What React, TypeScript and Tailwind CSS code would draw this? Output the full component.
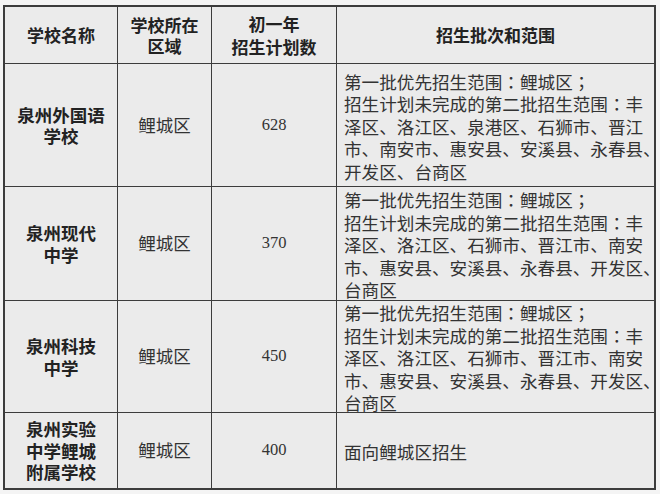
const rows = [
  {
    name: ["泉州外国语", "学校"],
    area: "鲤城区",
    count: "628",
    scope: [
      "第一批优先招生范围：鲤城区；",
      "招生计划未完成的第二批招生范围：丰",
      "泽区、洛江区、泉港区、石狮市、晋江",
      "市、南安市、惠安县、安溪县、永春县、",
      "开发区、台商区",
    ],
    h: "h-[122px]",
  },
  {
    name: ["泉州现代", "中学"],
    area: "鲤城区",
    count: "370",
    scope: [
      "第一批优先招生范围：鲤城区；",
      "招生计划未完成的第二批招生范围：丰",
      "泽区、洛江区、石狮市、晋江市、南安",
      "市、惠安县、安溪县、永春县、开发区、",
      "台商区",
    ],
    h: "h-[113px]",
  },
  {
    name: ["泉州科技", "中学"],
    area: "鲤城区",
    count: "450",
    scope: [
      "第一批优先招生范围：鲤城区；",
      "招生计划未完成的第二批招生范围：丰",
      "泽区、洛江区、石狮市、晋江市、南安",
      "市、惠安县、安溪县、永春县、开发区、",
      "台商区",
    ],
    h: "h-[111px]",
  },
  {
    name: ["泉州实验", "中学鲤城", "附属学校"],
    area: "鲤城区",
    count: "400",
    scope: ["面向鲤城区招生"],
    h: "h-[75px]",
  },
];

const sans = "font-['Noto_Sans_CJK_SC','Noto_Sans',sans-serif]";

// colon / semicolon drawn centred in their box, as in the source
function Line({ text }: { text: string }) {
  const parts = text.split(/([：；])/);
  return (
    <span className="whitespace-nowrap">
      {parts.map((p, i) =>
        p === "：" || p === "；" ? (
          <span key={i} className="font-['Noto_Sans_CJK_JP',sans-serif]">
            {p}
          </span>
        ) : (
          <span key={i}>{p}</span>
        )
      )}
    </span>
  );
}

export default function App() {
  return (
    <div className={`min-h-[494px] w-[660px] bg-[#f4f4f4] pt-[5px] pl-[3px] ${sans} text-[#222]`}>
      <div className="grid w-[653px] grid-cols-[112px_93px_124px_317px] gap-px bg-[#3c3c3c] p-[2px]">
        {/* header */}
        <div className="flex h-[56px] items-center justify-center bg-[#ebebeb] text-center text-[17px] font-bold leading-[24px]">
          学校名称
        </div>
        <div className="flex h-[56px] flex-col items-center justify-center bg-[#ebebeb] text-center text-[17px] font-bold leading-[21px]">
          <span>学校所在</span>
          <span>区域</span>
        </div>
        <div className="flex h-[56px] flex-col items-center justify-center bg-[#ebebeb] text-center text-[17px] font-bold leading-[23px]">
          <span>初一年</span>
          <span>招生计划数</span>
        </div>
        <div className="flex h-[56px] items-center justify-center bg-[#ebebeb] text-center text-[17px] font-bold leading-[24px]">
          招生批次和范围
        </div>

        {rows.map((r) => (
          <div key={r.count + r.name[0]} className="contents">
            <div className={`flex ${r.h} flex-col items-center justify-center bg-[#ebebeb] text-center text-[17.5px] font-bold leading-[21.5px]`}>
              {r.name.map((n) => (
                <span key={n}>{n}</span>
              ))}
            </div>
            <div className={`flex ${r.h} items-center justify-center bg-[#ebebeb] text-[17.5px] text-[#333]`}>
              {r.area}
            </div>
            <div className={`flex ${r.h} items-center justify-center bg-[#ebebeb] font-['Liberation_Serif',serif] text-[16.5px] text-[#333]`}>
              {r.count}
            </div>
            <div className={`flex ${r.h} flex-col justify-center bg-[#ebebeb] pl-[7px] pt-[4px] text-[17.6px] leading-[22.5px] text-[#333]`}>
              {r.scope.map((s) => (
                <Line key={s} text={s} />
              ))}
            </div>
          </div>
        ))}
      </div>
    </div>
  );
}
